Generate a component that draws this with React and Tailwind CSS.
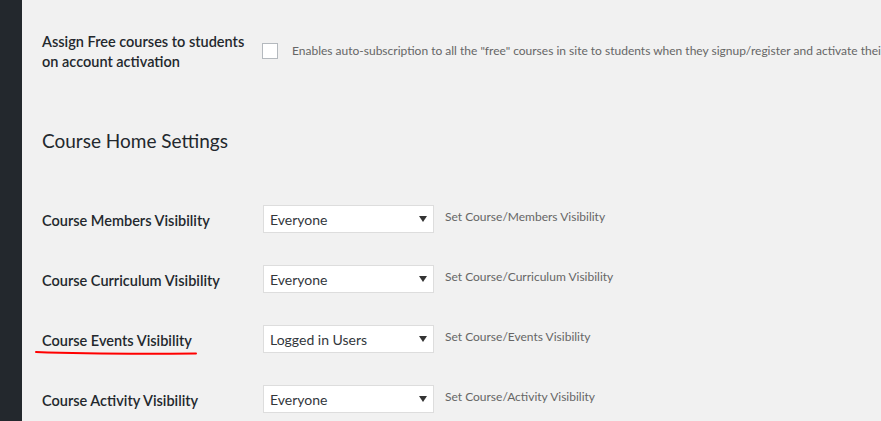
import React from "react";

const rows = [
  { label: "Course Members Visibility", value: "Everyone", desc: "Set Course/Members Visibility" },
  { label: "Course Curriculum Visibility", value: "Everyone", desc: "Set Course/Curriculum Visibility" },
  { label: "Course Events Visibility", value: "Logged in Users", desc: "Set Course/Events Visibility", mark: true },
  { label: "Course Activity Visibility", value: "Everyone", desc: "Set Course/Activity Visibility" },
];

function Select({ value }) {
  return (
    <div className="flex items-center justify-between w-[171px] h-[28px] bg-white border border-[#dddddd] pl-[6px] pr-[5px] text-[14px] text-[#32373c]">
      <span>{value}</span>
      <svg width="8" height="6" viewBox="0 0 8 6" className="mr-[1px]">
        <path d="M0 0 L8 0 L4 6 Z" fill="#333" />
      </svg>
    </div>
  );
}

export default function App() {
  return (
    <div
      className="flex w-[881px] h-[421px] overflow-hidden bg-[#f1f1f1]"
      style={{ fontFamily: 'Lato, "Noto Sans", sans-serif' }}
    >
      <div className="w-[22px] shrink-0 bg-[#23282d]" />
      <div className="flex-1 pl-[20px] pt-[32px] text-[#23282d] whitespace-nowrap">
        <div className="flex">
          <div className="w-[220px] shrink-0 text-[14.5px] leading-[20px] font-semibold">
            Assign Free courses to students
            <br />
            on account activation
          </div>
          <div className="flex items-start pt-[11px]">
            <div className="w-[16px] h-[16px] border border-[#b4b9be] bg-white shrink-0" />
            <span className="ml-[14px] -mt-[2px] text-[12px] leading-[20px] text-[#666]">
              Enables auto-subscription to all the "free" courses in site to students when they signup/register and activate their account
            </span>
          </div>
        </div>
        <h2 className="mt-[57px] text-[19px] leading-[24px] font-normal">Course Home Settings</h2>
        <div className="mt-[36px]">
          {rows.map((r) => (
            <div key={r.label} className="flex items-center h-[60px]">
              <div className="relative w-[221px] shrink-0 text-[14.5px] font-semibold leading-[20px] pt-[3px]">
                {r.label}
                {r.mark && (
                  <svg className="absolute left-[-7px] top-[22px]" width="166" height="6" viewBox="0 0 166 6">
                    <path d="M1 2 C 40 3.5, 100 4, 161 3.5" stroke="#ff0000" strokeWidth="2" fill="none" strokeLinecap="round" />
                  </svg>
                )}
              </div>
              <Select value={r.value} />
              <span className="ml-[11px] -mt-[4px] text-[12px] text-[#666]">{r.desc}</span>
            </div>
          ))}
        </div>
      </div>
    </div>
  );
}
